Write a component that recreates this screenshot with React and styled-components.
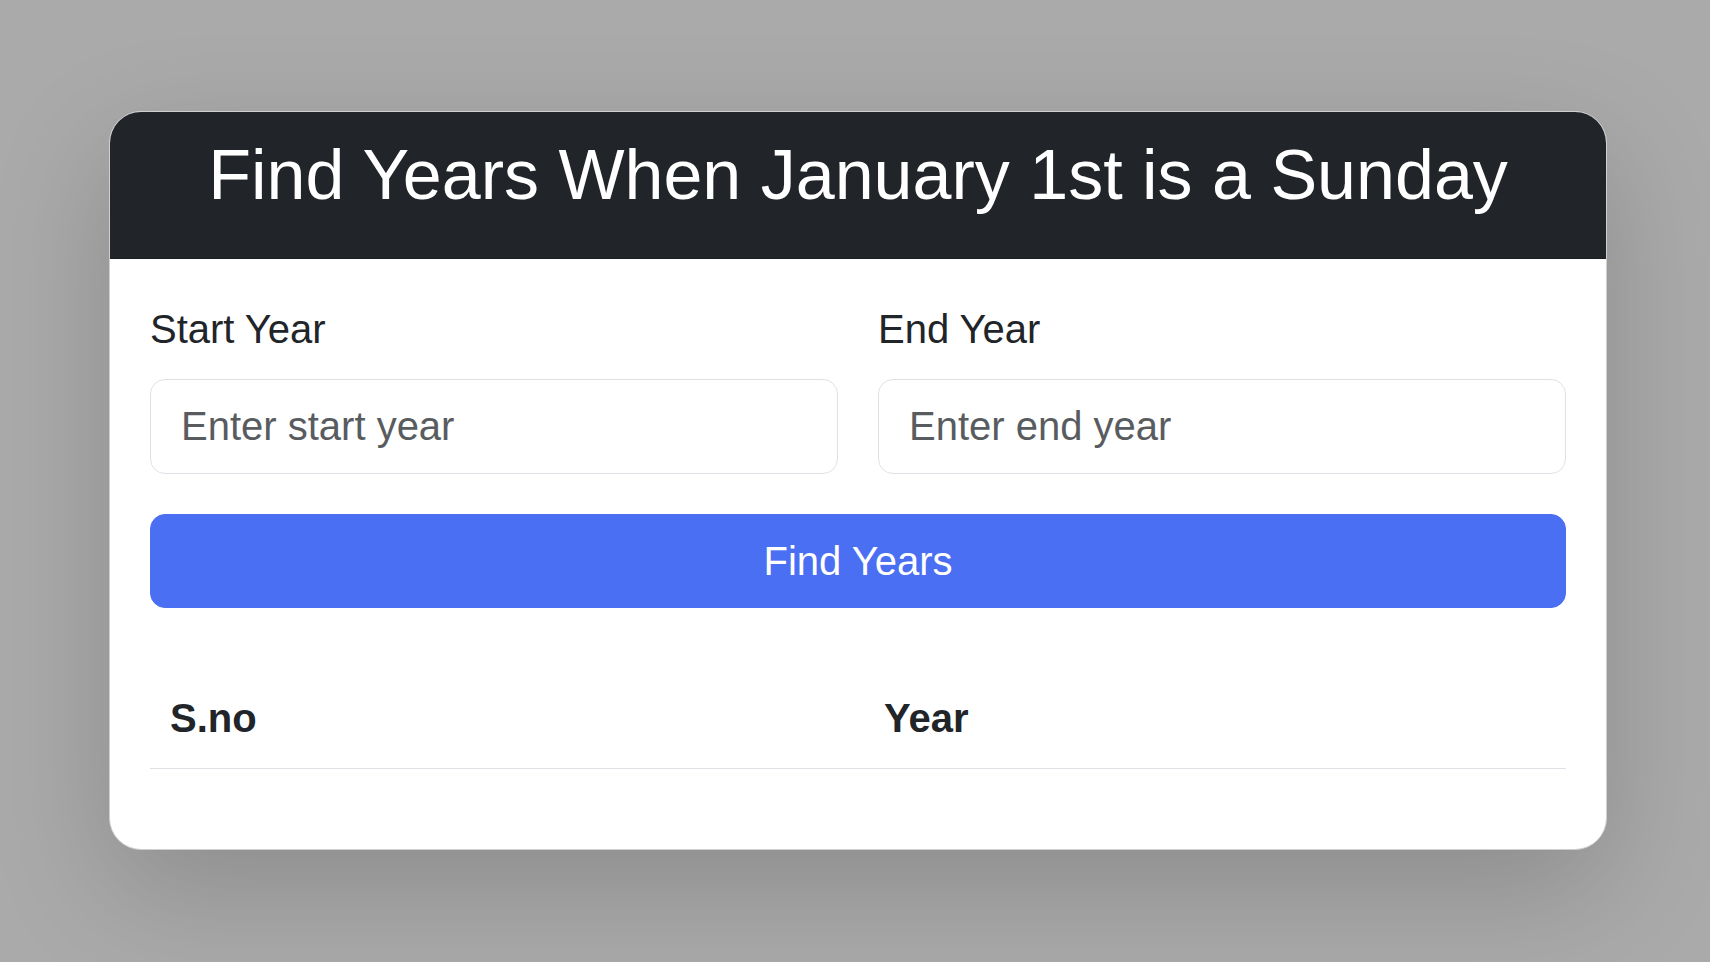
import React, { useState } from 'react';
import styled, { createGlobalStyle } from 'styled-components';

const GlobalStyle = createGlobalStyle`
  html, body {
    margin: 0;
    padding: 0;
    background: #aaaaaa;
  }
  body {
    font-family: "Liberation Sans", Arial, sans-serif;
    color: #212529;
  }
  * {
    box-sizing: border-box;
  }
`;

const sundayYears = (start, end) => {
  const out = [];
  for (let y = start; y <= end; y++) {
    if (new Date(y, 0, 1).getDay() === 0) out.push(y);
  }
  return out;
};

export default function App() {
  const [startYear, setStartYear] = useState('');
  const [endYear, setEndYear] = useState('');
  const [years, setYears] = useState([]);

  const handleFind = () => {
    const s = parseInt(startYear, 10);
    const e = parseInt(endYear, 10);
    if (isNaN(s) || isNaN(e)) return;
    setYears(sundayYears(s, e));
  };

  return (
    <Page>
      <GlobalStyle />
      <Card>
        <CardHeader>
          <Title>Find Years When January 1st is a Sunday</Title>
        </CardHeader>
        <CardBody>
          <FieldRow>
            <Field>
              <Label htmlFor='start'>Start Year</Label>
              <Input
                id='start'
                type='number'
                placeholder='Enter start year'
                value={startYear}
                onChange={e => setStartYear(e.target.value)}
              />
            </Field>
            <Field>
              <Label htmlFor='end'>End Year</Label>
              <Input
                id='end'
                type='number'
                placeholder='Enter end year'
                value={endYear}
                onChange={e => setEndYear(e.target.value)}
              />
            </Field>
          </FieldRow>
          <FindButton onClick={handleFind}>Find Years</FindButton>
          <Table>
            <thead>
              <tr>
                <Th $first>S.no</Th>
                <Th>Year</Th>
              </tr>
            </thead>
            <tbody>
              {years.map((y, idx) => (
                <tr key={y}>
                  <Td>{idx + 1}</Td>
                  <Td>{y}</Td>
                </tr>
              ))}
            </tbody>
          </Table>
        </CardBody>
      </Card>
    </Page>
  );
}

const Page = styled.div`
  min-height: 100vh;
  padding: 111px 0 0 109px;
`;

const Card = styled.div`
  width: 1498px;
  background: #fff;
  border: 1px solid #cfcfcf;
  border-radius: 32px;
  box-shadow: 0 40px 120px rgba(0, 0, 0, 0.175);
  overflow: hidden;
`;

const CardHeader = styled.div`
  background: #212529;
  padding: 21px 40px 21px;
  border-bottom: 1px solid #1a1d20;
  text-align: center;
`;

const Title = styled.h3`
  margin: 0 0 20px;
  font-size: 70px;
  line-height: 1.2;
  font-weight: 400;
  color: #fff;
`;

const CardBody = styled.div`
  padding: 40px;
`;

const FieldRow = styled.div`
  display: grid;
  grid-template-columns: 1fr 1fr;
  column-gap: 40px;
  margin-bottom: 40px;
`;

const Field = styled.div`
  display: flex;
  flex-direction: column;
`;

const Label = styled.label`
  font-size: 40px;
  line-height: 1.5;
  margin-bottom: 20px;
`;

const Input = styled.input`
  height: 95px;
  padding: 15px 30px;
  font-family: inherit;
  font-size: 40px;
  line-height: 1.5;
  color: #212529;
  border: 1px solid #dee2e6;
  border-radius: 15px;
  outline: none;
  appearance: textfield;

  &::placeholder {
    color: #595c5f;
  }
  &::-webkit-inner-spin-button,
  &::-webkit-outer-spin-button {
    -webkit-appearance: none;
    margin: 0;
  }
`;

const FindButton = styled.button`
  display: block;
  width: 100%;
  height: 94px;
  padding: 15px 30px;
  font-family: inherit;
  font-size: 40px;
  line-height: 1.5;
  color: #fff;
  background: #4a6ff3;
  border: 1px solid #4a6ff3;
  border-radius: 15px;
  cursor: pointer;
`;

const Table = styled.table`
  width: 100%;
  margin: 60px 0 40px;
  border-collapse: collapse;
`;

const Th = styled.th`
  width: ${p => (p.$first ? '714px' : 'auto')};
  padding: 20px;
  font-size: 40px;
  line-height: 1.5;
  font-weight: 700;
  text-align: left;
  border-bottom: 1px solid #dee2e6;
`;

const Td = styled.td`
  padding: 20px;
  font-size: 40px;
  line-height: 1.5;
  border-bottom: 1px solid #dee2e6;
`;
